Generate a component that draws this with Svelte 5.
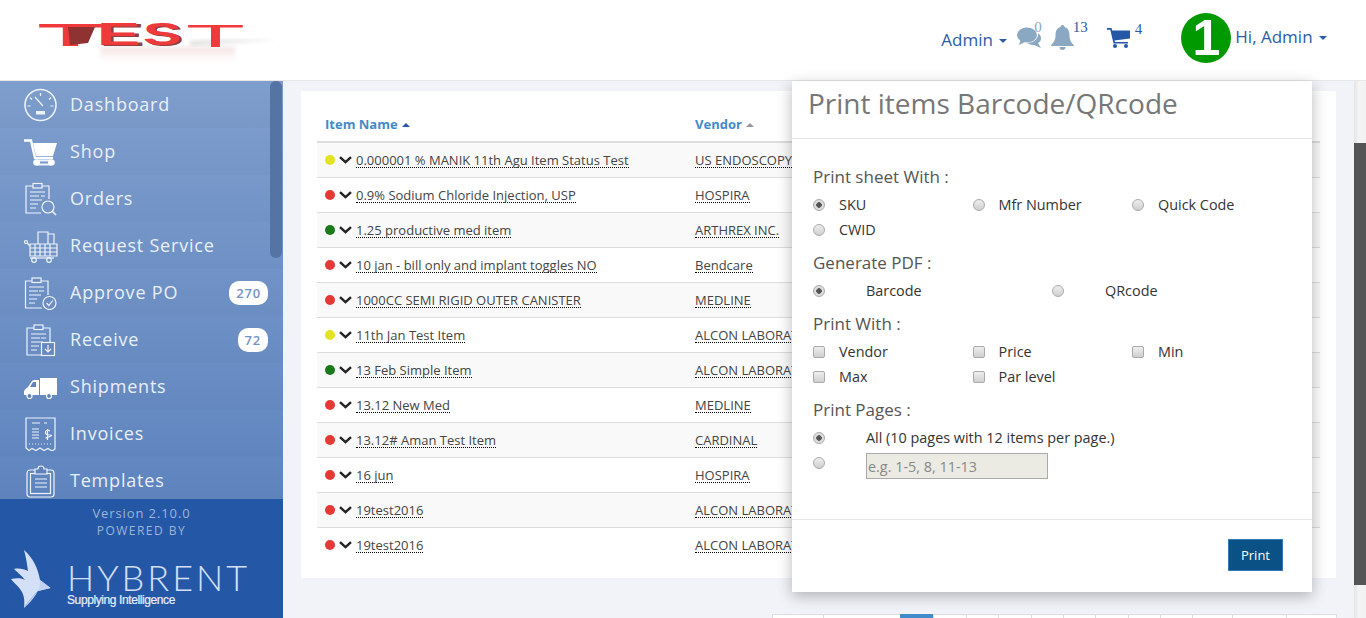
<script>
  const menu = [
    { name: 'Dashboard', icon: 'gauge' },
    { name: 'Shop', icon: 'cart' },
    { name: 'Orders', icon: 'orders' },
    { name: 'Request Service', icon: 'request' },
    { name: 'Approve PO', icon: 'approve', badge: 270 },
    { name: 'Receive', icon: 'receive', badge: 72 },
    { name: 'Shipments', icon: 'truck' },
    { name: 'Invoices', icon: 'invoice' },
    { name: 'Templates', icon: 'template' }
  ];

  const items = [
    { name: '0.000001 % MANIK 11th Agu Item Status Test', vendor: 'US ENDOSCOPY', status: 'yellow' },
    { name: '0.9% Sodium Chloride Injection, USP', vendor: 'HOSPIRA', status: 'red' },
    { name: '1.25 productive med item', vendor: 'ARTHREX INC.', status: 'green' },
    { name: '10 jan - bill only and implant toggles NO', vendor: 'Bendcare', status: 'red' },
    { name: '1000CC SEMI RIGID OUTER CANISTER', vendor: 'MEDLINE', status: 'red' },
    { name: '11th Jan Test Item', vendor: 'ALCON LABORATORIES', status: 'yellow' },
    { name: '13 Feb Simple Item', vendor: 'ALCON LABORATORIES', status: 'green' },
    { name: '13.12 New Med', vendor: 'MEDLINE', status: 'red' },
    { name: '13.12# Aman Test Item', vendor: 'CARDINAL', status: 'red' },
    { name: '16 jun', vendor: 'HOSPIRA', status: 'red' },
    { name: '19test2016', vendor: 'ALCON LABORATORIES', status: 'red' },
    { name: '19test2016', vendor: 'ALCON LABORATORIES', status: 'red' }
  ];

  const pages = [52, 78, 34, 34, 33, 34, 33, 33, 34, 33, 33, 41, 55, 51];
</script>

<div class="page">
  <header class="topbar">
    <div class="logo">
      <svg width="283" height="80" viewBox="0 0 283 80">
        <defs>
          <linearGradient id="fade" x1="0" y1="0" x2="0" y2="1">
            <stop offset="0" stop-color="#e9b9b9" stop-opacity="0.45" />
            <stop offset="1" stop-color="#fff" stop-opacity="0" />
          </linearGradient>
          <filter id="soft"><feGaussianBlur stdDeviation="2" /></filter>
        </defs>
        <rect x="100" y="47" width="135" height="20" fill="url(#fade)" filter="url(#soft)" />
        <polygon points="190,46 280,39 190,41" fill="#ddd" filter="url(#soft)" />
        <g class="side">
          <text x="99" y="46" textLength="46" lengthAdjust="spacingAndGlyphs">E</text>
          <text x="145" y="46" textLength="39" lengthAdjust="spacingAndGlyphs">S</text>
        </g>
        <g class="face">
          <text x="38" y="46" textLength="65" lengthAdjust="spacingAndGlyphs">T</text>
          <text x="97" y="45" textLength="43" lengthAdjust="spacingAndGlyphs">E</text>
          <text x="143" y="45" textLength="38" lengthAdjust="spacingAndGlyphs">S</text>
          <text class="thin" x="186" y="47" textLength="59" lengthAdjust="spacingAndGlyphs">T</text>
        </g>
        <polygon points="68,27 95,27 88,43 70,45" fill="#8f3232" />
      </svg>
    </div>

    <nav class="usernav">
      <span class="link">Admin <i class="caret"></i></span>
      <span class="notif chat">
        <svg width="25" height="22" viewBox="0 0 25 22" fill="#8aa8c2">
          <ellipse cx="10" cy="8" rx="10" ry="7.500" />
          <path d="M4 12 L2 18 L10 14Z" />
          <path d="M21 6 C25 9 25 14 21 16 L24 21 L17 18 C14 18 12 17 10 16 C16 16 22 12 21 6Z" />
        </svg>
        <sup class="grey">0</sup>
      </span>
      <span class="notif bell">
        <svg width="23" height="25" viewBox="0 0 23 25" fill="#8aa8c2">
          <path d="M11.500 0 C13 0 13.500 1 13.500 2 C17 3 18.500 6 18.500 10 C18.500 15 20 17 23 20.500 V21 H0 V20.500 C3 17 4.500 15 4.500 10 C4.500 6 6 3 9.500 2 C9.500 1 10 0 11.500 0Z" />
          <path d="M8.500 22 H14.500 C14.500 24 13 25 11.500 25 C10 25 8.500 24 8.500 22Z" />
        </svg>
        <sup>13</sup>
      </span>
      <span class="notif basket">
        <svg width="23" height="20" viewBox="0 0 23 20" fill="#2557a7">
          <path d="M0 0 H4.500 L5.200 2.500 H23 V10.500 L7.500 12.500 L8 14 H21 V15.500 H6.500 L3.300 1.700 H0Z" />
          <circle cx="8" cy="18" r="2" />
          <circle cx="19" cy="18" r="2" />
        </svg>
        <sup>4</sup>
      </span>
      <span class="avatar">1</span>
      <span class="link hi">Hi, Admin <i class="caret"></i></span>
    </nav>
  </header>

  <div class="body">
    <aside class="sidebar">
      <div class="menu">
        {#each menu as m}
          <div class="menu-item">
            <svg class="menu-icon" width="34" height="34" viewBox="0 0 34 34" fill="none" stroke="#eef3fb" stroke-width="1.200">
              {#if m.icon === 'gauge'}
                <circle cx="16.500" cy="17" r="15.500" stroke-width="1.600" />
                <path d="M16.500 5v3M6 9.500l2 2M27 9.500l-2 2M3.500 18h3M26.500 18h3M11 9l8 9" />
                <path d="M12 23h9v3.500h-9z" fill="#eef3fb" stroke="none" />
              {:else if m.icon === 'cart'}
                <path d="M0 5.500H7L11 23H29" stroke-width="2.400" stroke="#fff" />
                <path d="M9 8H33L29 21H12Z" fill="#fff" stroke="none" />
                <rect x="10" y="25.500" width="20" height="4" rx="2" stroke-width="1.800" />
                <circle cx="13" cy="27.500" r="3" fill="#fff" stroke="none" />
                <circle cx="27" cy="27.500" r="3" fill="#fff" stroke="none" />
              {:else if m.icon === 'orders'}
                <path d="M17 31H2V4H25V17" />
                <rect x="9" y="1.500" width="9" height="4.500" fill="#7493c7" />
                <path d="M6 10h15M6 14h9M17 14h4M6 18h12M6 22h8M6 26h6" />
                <circle cx="24" cy="25" r="6" />
                <path d="M28 29l4 4" stroke-width="1.600" />
              {:else if m.icon === 'request'}
                <circle cx="2" cy="13" r="1.500" />
                <path d="M3 14L6 17" />
                <path d="M6 15H33V27H6ZM6 19H33M6 23H33M11 15V27M16 15V27M21 15V27M26 15V27" />
                <path d="M14 15V3H24V15M24 5H30V15" />
                <path d="M6 29H30" />
                <circle cx="10" cy="31" r="2.300" />
                <circle cx="25" cy="31" r="2.300" />
              {:else if m.icon === 'approve'}
                <path d="M18 32H1.500V5H24V19" />
                <rect x="8" y="2" width="9" height="4.500" fill="#6d8dc3" />
                <path d="M5 11h15M5 15h9M15 15h5M5 19h12M5 23h8M5 27h6" />
                <circle cx="25.500" cy="27" r="6.500" fill="#6d8dc3" />
                <path d="M22.500 27l2.300 2.500 4-5" />
              {:else if m.icon === 'receive'}
                <path d="M18 32H3V5H26V19" />
                <rect x="10" y="2" width="9" height="4.500" fill="#6888c0" />
                <path d="M7 11h15M7 15h9M17 15h5M7 19h12M7 23h8M7 27h6" />
                <rect x="17.500" y="19.500" width="13" height="13" fill="#6888c0" />
                <path d="M24 22v7M21 26l3 3 3-3" />
              {:else if m.icon === 'truck'}
                <path d="M16 8H33V25H16Z" fill="#fff" stroke="none" />
                <path d="M15 10V25H0V21Q1 19 4 17L8 11Q9 10 11 10Z" fill="#fff" stroke="none" />
                <path d="M12 12V17H6L9 12Z" fill="#6483bd" stroke="none" />
                <circle cx="5.500" cy="26" r="2.500" fill="#6483bd" stroke="#fff" />
                <circle cx="25" cy="26" r="2.500" fill="#6483bd" stroke="#fff" />
              {:else if m.icon === 'invoice'}
                <path d="M2 1H31V32L28 34L24 31.500L20 33.500L16 31L12 33.500L8 31.500L5 33.500L2 31Z" />
                <path d="M8 6h8M20 6h3M8 12h7M8 15h7M8 18h7M8 21h7" />
                <path d="M26 14q-4-2-4.500 1t4.500 3t-4.500 3M23.500 12v11" />
                <path d="M5 27h24" stroke-dasharray="1 2" />
              {:else if m.icon === 'template'}
                <rect x="3" y="6" width="27" height="27" rx="3" />
                <rect x="6.500" y="9.500" width="20" height="20" />
                <path d="M11 5h3q0-3 3-3t3 3h3v5H11Z" fill="#6080bb" />
                <path d="M11 15h12M11 19h12M11 23h12" />
              {/if}
            </svg>
            <span class="menu-label">{m.name}</span>
            {#if m.badge}<span class="badge">{m.badge}</span>{/if}
          </div>
        {/each}
        <div class="thumb"></div>
      </div>

      <footer class="side-foot">
        <div class="version">Version 2.10.0</div>
        <div class="powered">POWERED BY</div>
        <div class="brand">
          <svg width="40" height="58" viewBox="0 0 40 58">
            <path d="M13 0 C22 8 27 18 29 30 L39.500 38 L27 41 C22 46 17 52 13 58 C14 50 13 44 9 39 C6 35 3 33 0 29 C5 28 11 28 14 30 C10 25 6 22 3 19 C8 18 13 19 17 21 C16 14 15 7 13 0Z" fill="#d3e0f8" />
            <path d="M13 58 C17 52 22 46 27 41 L39.500 38 L29 30 C30 40 22 50 13 58Z" fill="#c2d3f2" />
          </svg>
          <div class="brand-text">
            <div class="brand-name">HYBRENT</div>
            <div class="brand-sub">Supplying Intelligence</div>
          </div>
        </div>
      </footer>
    </aside>

    <main class="content">
      <section class="card">
        <table>
          <colgroup>
            <col style="width: 370px" />
            <col style="width: 300px" />
            <col />
          </colgroup>
          <thead>
            <tr>
              <th>Item Name <i class="sort active"></i></th>
              <th>Vendor <i class="sort"></i></th>
              <th></th>
            </tr>
          </thead>
          <tbody>
            {#each items as item}
              <tr>
                <td>
                  <span class="name-cell">
                    <i class="dot {item.status}"></i>
                    <svg class="chev" width="13" height="8" viewBox="0 0 13 8" fill="none" stroke="#222" stroke-width="2.400">
                      <path d="M1 1.200l5.500 5 5.500-5" />
                    </svg>
                    <span class="dotted">{item.name}</span>
                  </span>
                </td>
                <td><span class="vendor-cell"><span class="dotted">{item.vendor}</span></span></td>
                <td></td>
              </tr>
            {/each}
          </tbody>
        </table>
      </section>

      <ul class="pager">
        {#each pages as w, i}
          <li class:active={i === 2} style="width: {w}px"></li>
        {/each}
      </ul>
    </main>

    <div class="scrollbar"><div class="scroll-thumb"></div></div>
  </div>

  <div class="modal">
    <h2>Print items Barcode/QRcode</h2>
    <form class="modal-body" on:submit|preventDefault>
      <h4>Print sheet With :</h4>
      <div class="opts three">
        <label><input type="radio" name="sheet" checked />SKU</label>
        <label><input type="radio" name="sheet" />Mfr Number</label>
        <label><input type="radio" name="sheet" />Quick Code</label>
        <label><input type="radio" name="sheet" />CWID</label>
      </div>

      <h4>Generate PDF :</h4>
      <div class="opts two">
        <label><input type="radio" name="pdf" checked />Barcode</label>
        <label><input type="radio" name="pdf" />QRcode</label>
      </div>

      <h4>Print With :</h4>
      <div class="opts three">
        <label><input type="checkbox" />Vendor</label>
        <label><input type="checkbox" />Price</label>
        <label><input type="checkbox" />Min</label>
        <label><input type="checkbox" />Max</label>
        <label><input type="checkbox" />Par level</label>
      </div>

      <h4>Print Pages :</h4>
      <div class="pages-opts">
        <label><input type="radio" name="range" checked />All (10 pages with 12 items per page.)</label>
        <label class="range"><input type="radio" name="range" /><input class="range-input" type="text" placeholder="e.g. 1-5, 8, 11-13" disabled /></label>
      </div>
    </form>
    <div class="modal-foot">
      <button type="button">Print</button>
    </div>
  </div>
</div>

<style>
  :global(body) {
    margin: 0;
    background: #f1f3f8;
    overflow: hidden;
  }

  .page {
    position: relative;
    height: 618px;
    overflow: hidden;
    font-family: "Open Sans", sans-serif;
    color: #333;
    display: flex;
    flex-direction: column;
  }

  .topbar {
    height: 80px;
    flex: none;
    background: #fff;
    border-bottom: 1px solid #e7e7e7;
    display: flex;
    justify-content: space-between;
  }

  .logo svg { display: block; }
  .logo text {
    font-family: "Liberation Sans", sans-serif;
    font-weight: 700;
    font-size: 32px;
  }
  .logo text.thin { font-weight: 400; }
  .side text { fill: #8f4040; }
  .face text { fill: #ee3a3a; }

  .usernav {
    display: flex;
    align-items: flex-start;
    padding-right: 39px;
    color: #2a5ca8;
  }

  .link {
    font-size: 17px;
    line-height: 22px;
    margin-top: 29px;
    white-space: nowrap;
  }
  .link.hi { margin-top: 26px; margin-left: 4px; }

  .caret {
    display: inline-block;
    width: 0;
    height: 0;
    margin-left: 2px;
    vertical-align: middle;
    border-top: 4px solid #2a5ca8;
    border-left: 4px solid transparent;
    border-right: 4px solid transparent;
  }

  .notif {
    display: flex;
    align-items: flex-start;
  }
  .notif sup {
    font-family: "Liberation Serif", serif;
    font-size: 15px;
    line-height: 16px;
    vertical-align: baseline;
    color: #2a5ca8;
  }
  .notif sup.grey { color: #8aa8c2; margin-left: -8px; }
  .chat { margin: 27px 0 0 10px; }
  .chat sup { margin-top: -8px; }
  .bell { margin: 25px 0 0 9px; }
  .bell sup { margin-top: -6px; margin-left: -1px; }
  .basket { margin: 28px 0 0 19px; }
  .basket sup { margin-top: -7px; margin-left: 5px; }

  .avatar {
    width: 50px;
    height: 50px;
    margin: 13px 0 0 39px;
    border-radius: 50%;
    background: #009900;
    color: #fff;
    font-family: "Liberation Sans", sans-serif;
    font-weight: 700;
    font-size: 50px;
    line-height: 50px;
    text-align: center;
  }

  .body {
    flex: 1;
    display: flex;
    min-height: 0;
  }

  .sidebar {
    width: 283px;
    flex: none;
    display: flex;
    flex-direction: column;
  }

  .menu {
    position: relative;
    height: 418px;
    overflow: hidden;
    background: linear-gradient(#7d9dcc, #5e84bf);
  }

  .menu-item {
    height: 47px;
    box-sizing: border-box;
    padding: 0 15px 0 24px;
    display: flex;
    align-items: center;
    background: linear-gradient(rgba(255, 255, 255, 0.012), rgba(0, 0, 0, 0.012));
  }

  .menu-icon { flex: none; }

  .menu-label {
    margin: 0 0 2px 12px;
    font-size: 18px;
    letter-spacing: 0.8px;
    color: #e9eff8;
    white-space: nowrap;
  }

  .badge {
    margin-left: auto;
    padding: 0 7px;
    min-width: 16px;
    height: 24px;
    line-height: 24px;
    border-radius: 10px;
    background: #fff;
    color: #7492c8;
    font-size: 13px;
    font-weight: 600;
    letter-spacing: 0.8px;
    text-align: center;
  }

  .thumb {
    position: absolute;
    top: 0;
    right: 1px;
    width: 12px;
    height: 177px;
    border-radius: 6px;
    background: #5574a4;
  }

  .side-foot {
    flex: 1;
    background: #2557a7;
    text-align: center;
    color: #9fb4d8;
  }

  .version {
    margin-top: 5px;
    font-size: 13px;
    line-height: 18px;
    letter-spacing: 0.9px;
  }

  .powered {
    font-size: 12px;
    line-height: 18px;
    letter-spacing: 1.5px;
  }

  .brand {
    display: flex;
    margin: 10px 0 0 11px;
    text-align: left;
  }

  .brand-text { margin: 12px 0 0 16px; }

  .brand-name {
    font-family: Lato, sans-serif;
    font-weight: 300;
    font-size: 36px;
    line-height: 30px;
    letter-spacing: 3px;
    color: #d3e0f8;
  }

  .brand-sub {
    margin-top: 3px;
    font-family: "Liberation Sans", sans-serif;
    font-size: 12px;
    line-height: 10px;
    letter-spacing: -0.4px;
    color: #e6eefb;
    -webkit-text-stroke: 0.2px #e6eefb;
  }

  .content {
    flex: 1;
    min-width: 0;
    padding: 10px 18px 0;
  }

  .card {
    height: 487px;
    box-sizing: border-box;
    padding: 17px 16px 0;
    background: #fff;
  }

  table {
    width: 100%;
    table-layout: fixed;
    border-collapse: collapse;
    font-size: 13px;
  }

  th {
    height: 34px;
    padding: 0 8px 2px;
    text-align: left;
    font-size: 13px;
    font-weight: 700;
    color: #428bca;
    border-bottom: 2px solid #ddd;
    box-sizing: border-box;
  }

  .sort {
    display: inline-block;
    width: 0;
    height: 0;
    margin-left: 1px;
    vertical-align: 2px;
    border-bottom: 4px solid #999;
    border-left: 4px solid transparent;
    border-right: 4px solid transparent;
  }
  .sort.active { border-bottom-color: #2557a7; }

  td {
    height: 35px;
    box-sizing: border-box;
    padding: 1px 8px 0;
    border-bottom: 1px solid #ddd;
    color: #444;
    white-space: nowrap;
  }

  tbody tr:nth-child(odd) { background: #f9f9f9; }
  tbody tr:last-child td { border-bottom: 0; }

  .name-cell,
  .vendor-cell {
    display: flex;
    align-items: center;
  }

  .dot {
    width: 10px;
    height: 10px;
    border-radius: 50%;
    flex: none;
  }
  .dot.yellow { background: #e3e324; }
  .dot.red { background: #e53935; }
  .dot.green { background: #1a7a1a; }

  .chev { margin: 0 4px 0 4px; flex: none; }

  .dotted {
    border-bottom: 1px dotted #000;
    line-height: 14px;
    display: inline-block;
  }

  .pager {
    list-style: none;
    display: flex;
    margin: 36px 0 0 472px;
    padding: 0;
  }

  .pager li {
    height: 30px;
    flex: none;
    box-sizing: border-box;
    background: #fff;
    border: 1px solid #ddd;
    margin-left: -1px;
  }
  .pager li.active {
    background: #428bca;
    border-color: #428bca;
  }

  .scrollbar {
    width: 12px;
    flex: none;
    background: linear-gradient(90deg, #e4e4e4, #f4f4f4 40%, #f1f1f1);
  }

  .scroll-thumb {
    height: 442px;
    margin-top: 62px;
    background: #555;
  }

  .modal {
    position: absolute;
    top: 81px;
    left: 792px;
    width: 520px;
    height: 511px;
    display: flex;
    flex-direction: column;
    background: #fff;
    box-shadow: 0 4px 14px rgba(0, 0, 0, 0.28);
  }

  .modal h2 {
    margin: 0;
    height: 58px;
    flex: none;
    box-sizing: border-box;
    padding: 4px 16px 0;
    font-size: 28px;
    line-height: 37px;
    font-weight: 400;
    color: #777;
    border-bottom: 1px solid #e5e5e5;
  }

  .modal-body {
    flex: 1;
    padding: 27px 21px 0;
  }

  h4 {
    margin: 10px 0 0;
    font-size: 17px;
    line-height: 22px;
    font-weight: 400;
    color: #555;
  }
  h4:first-child { margin-top: 0; }

  .opts {
    display: grid;
    margin-top: 4px;
    grid-auto-rows: 25px;
  }
  .three { grid-template-columns: repeat(3, 159.5px); }
  .two { grid-template-columns: 239px 239px; }

  label {
    display: flex;
    align-items: center;
    font-size: 14.4px;
    color: #333;
  }

  input[type="radio"],
  input[type="checkbox"] {
    appearance: none;
    width: 12px;
    height: 12px;
    margin: 0 14px 0 0;
    flex: none;
    box-sizing: border-box;
    border: 1px solid #aaa;
    background: linear-gradient(#eee, #cfcfcf);
  }
  input[type="radio"] { border-radius: 50%; }
  input[type="checkbox"] { border-radius: 2px; }
  input[type="radio"]:checked {
    background: radial-gradient(circle, #555 0 2.500px, #ddd 3px);
  }

  .two input[type="radio"] { margin-right: 41px; }

  .pages-opts { margin-top: 4px; }
  .pages-opts label { height: 25px; }
  .pages-opts input[type="radio"] { margin-right: 41px; }
  .pages-opts .range { align-items: flex-start; height: 29px; }
  .range input[type="radio"] { margin-top: 7px; }

  .range-input {
    width: 182px;
    height: 26px;
    margin-top: 3px;
    box-sizing: border-box;
    padding: 0 1px;
    background: #ebebe4;
    border: 1px solid #aaa;
    font: 14.4px "Open Sans", sans-serif;
  }
  .range-input::placeholder { color: #888; }

  .modal-foot {
    height: 73px;
    flex: none;
    box-sizing: border-box;
    border-top: 1px solid #e5e5e5;
    padding: 19px 29px 0 0;
    display: flex;
    justify-content: flex-end;
    align-items: flex-start;
  }

  button {
    width: 55px;
    height: 32px;
    padding: 0;
    background: #0a5185;
    border: 1px solid #337ab7;
    color: #fff;
    font: 13px "Open Sans", sans-serif;
  }
</style>
